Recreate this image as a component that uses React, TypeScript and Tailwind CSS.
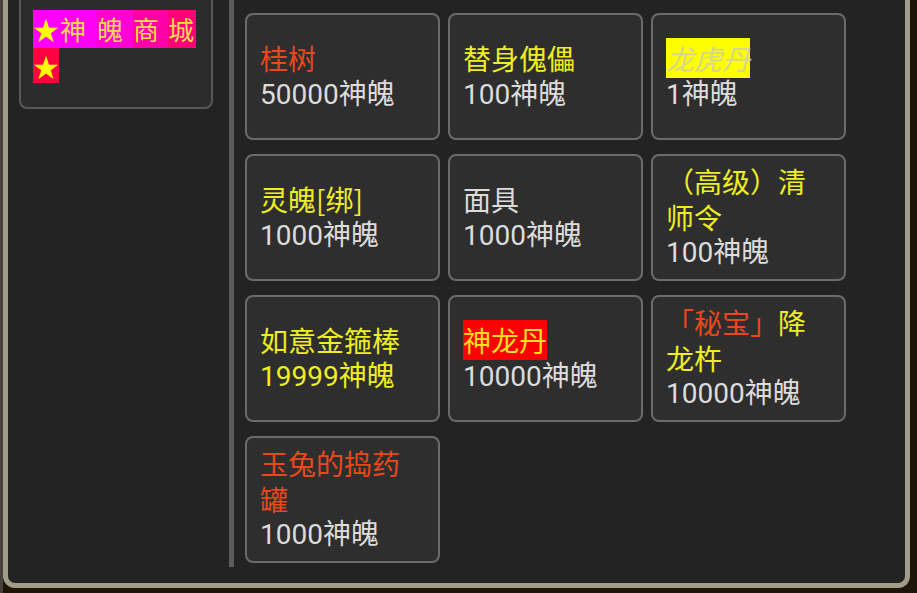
type Seg = { text: string; color: string; bg?: string; italic?: boolean };

interface Item {
  name: Seg[];
  price: string;
  priceColor?: string;
}

const YELLOW = 'text-[#eeee22]';
const RED = 'text-[#e8481c]';
const GRAY = 'text-[#dcdcdc]';

const items: Item[] = [
  { name: [{ text: '桂树', color: RED }], price: '50000神魄' },
  { name: [{ text: '替身傀儡', color: YELLOW }], price: '100神魄' },
  { name: [{ text: '龙虎丹', color: 'text-[#d6d68e]', bg: 'bg-[#ffff00]', italic: true }], price: '1神魄' },
  { name: [{ text: '灵魄[绑]', color: YELLOW }], price: '1000神魄' },
  { name: [{ text: '面具', color: GRAY }], price: '1000神魄' },
  { name: [{ text: '（高级）清师令', color: YELLOW }], price: '100神魄' },
  { name: [{ text: '如意金箍棒', color: YELLOW }], price: '19999神魄', priceColor: YELLOW },
  { name: [{ text: '神龙丹', color: 'text-[#ffe01c]', bg: 'bg-[#ff0000]' }], price: '10000神魄' },
  {
    name: [
      { text: '「秘宝」', color: RED },
      { text: '降龙杵', color: YELLOW },
    ],
    price: '10000神魄',
  },
  { name: [{ text: '玉兔的捣药罐', color: RED }], price: '1000神魄' },
];

const titleChars = [
  { ch: '★', w: 'w-[27px]', bg: 'bg-[#ff00ff]', star: true },
  { ch: '神', w: 'w-[37px]', bg: 'bg-[#ff00f4]' },
  { ch: '魄', w: 'w-[36px]', bg: 'bg-[#ff00d6]' },
  { ch: '商', w: 'w-[35px]', bg: 'bg-[#ff00a8]' },
  { ch: '城', w: 'w-[28px]', bg: 'bg-[#ff0078]' },
];

function ShopCard({ item }: { readonly item: Item }) {
  return (
    <div className="flex flex-col justify-center rounded-[8px] border-2 border-[#6b6b6b] bg-[#2e2e2e] px-[13px] text-[28px] leading-[33.5px]">
      <div className="break-all">
        {item.name.map((s) => (
          <span
            key={s.text}
            className={`${s.color} ${s.bg ?? ''} ${s.italic ? 'italic' : ''} [font-family:'Noto_Sans_CJK_SC',Roboto,sans-serif]`}
          >
            {s.text}
          </span>
        ))}
      </div>
      <div className={item.priceColor ?? GRAY}>{item.price}</div>
    </div>
  );
}

export default function App() {
  return (
    <div className="h-[593px] w-[917px] overflow-hidden border-l-[3px] border-[#47433c] bg-[#1e1509] [font-family:Roboto,'Noto_Sans_CJK_SC',sans-serif]">
      <div className="flex h-[588px] w-[907px] overflow-hidden rounded-b-[12px] border-x-[5px] border-b-[5px] border-[#a29d89] bg-[#232323]">
        <div className="w-[221px] shrink-0 pl-[11px]">
          <div className="mt-[-12px] w-[194px] rounded-[8px] border-2 border-[#585858] bg-[#2c2c2c] px-[12px] pt-[20px] pb-[24px]">
            <div className="flex h-[38px] text-[26px] leading-[38px]">
              {titleChars.map((c) => (
                <span
                  key={c.ch}
                  className={`${c.w} ${c.bg} ${c.star ? 'text-[#ffff00]' : 'text-[#ffdc4a]'} [font-family:'Noto_Sans_CJK_SC',sans-serif]`}
                >
                  {c.ch}
                </span>
              ))}
            </div>
            <div className="flex h-[35px] text-[26px] leading-[35px]">
              <span className="w-[26px] bg-[#ff0040] text-[#ffff00] [font-family:'Noto_Sans_CJK_SC',sans-serif]">★</span>
            </div>
          </div>
        </div>
        <div className="h-[567px] w-[5px] shrink-0 bg-[#5c5c5c]" />
        <div className="mt-[13px] ml-[11px] grid grid-cols-[repeat(3,195px)] auto-rows-[127px] gap-x-[8px] gap-y-[14px] self-start">
          {items.map((it) => (
            <ShopCard key={it.name.map((s) => s.text).join('')} item={it} />
          ))}
        </div>
      </div>
    </div>
  );
}
